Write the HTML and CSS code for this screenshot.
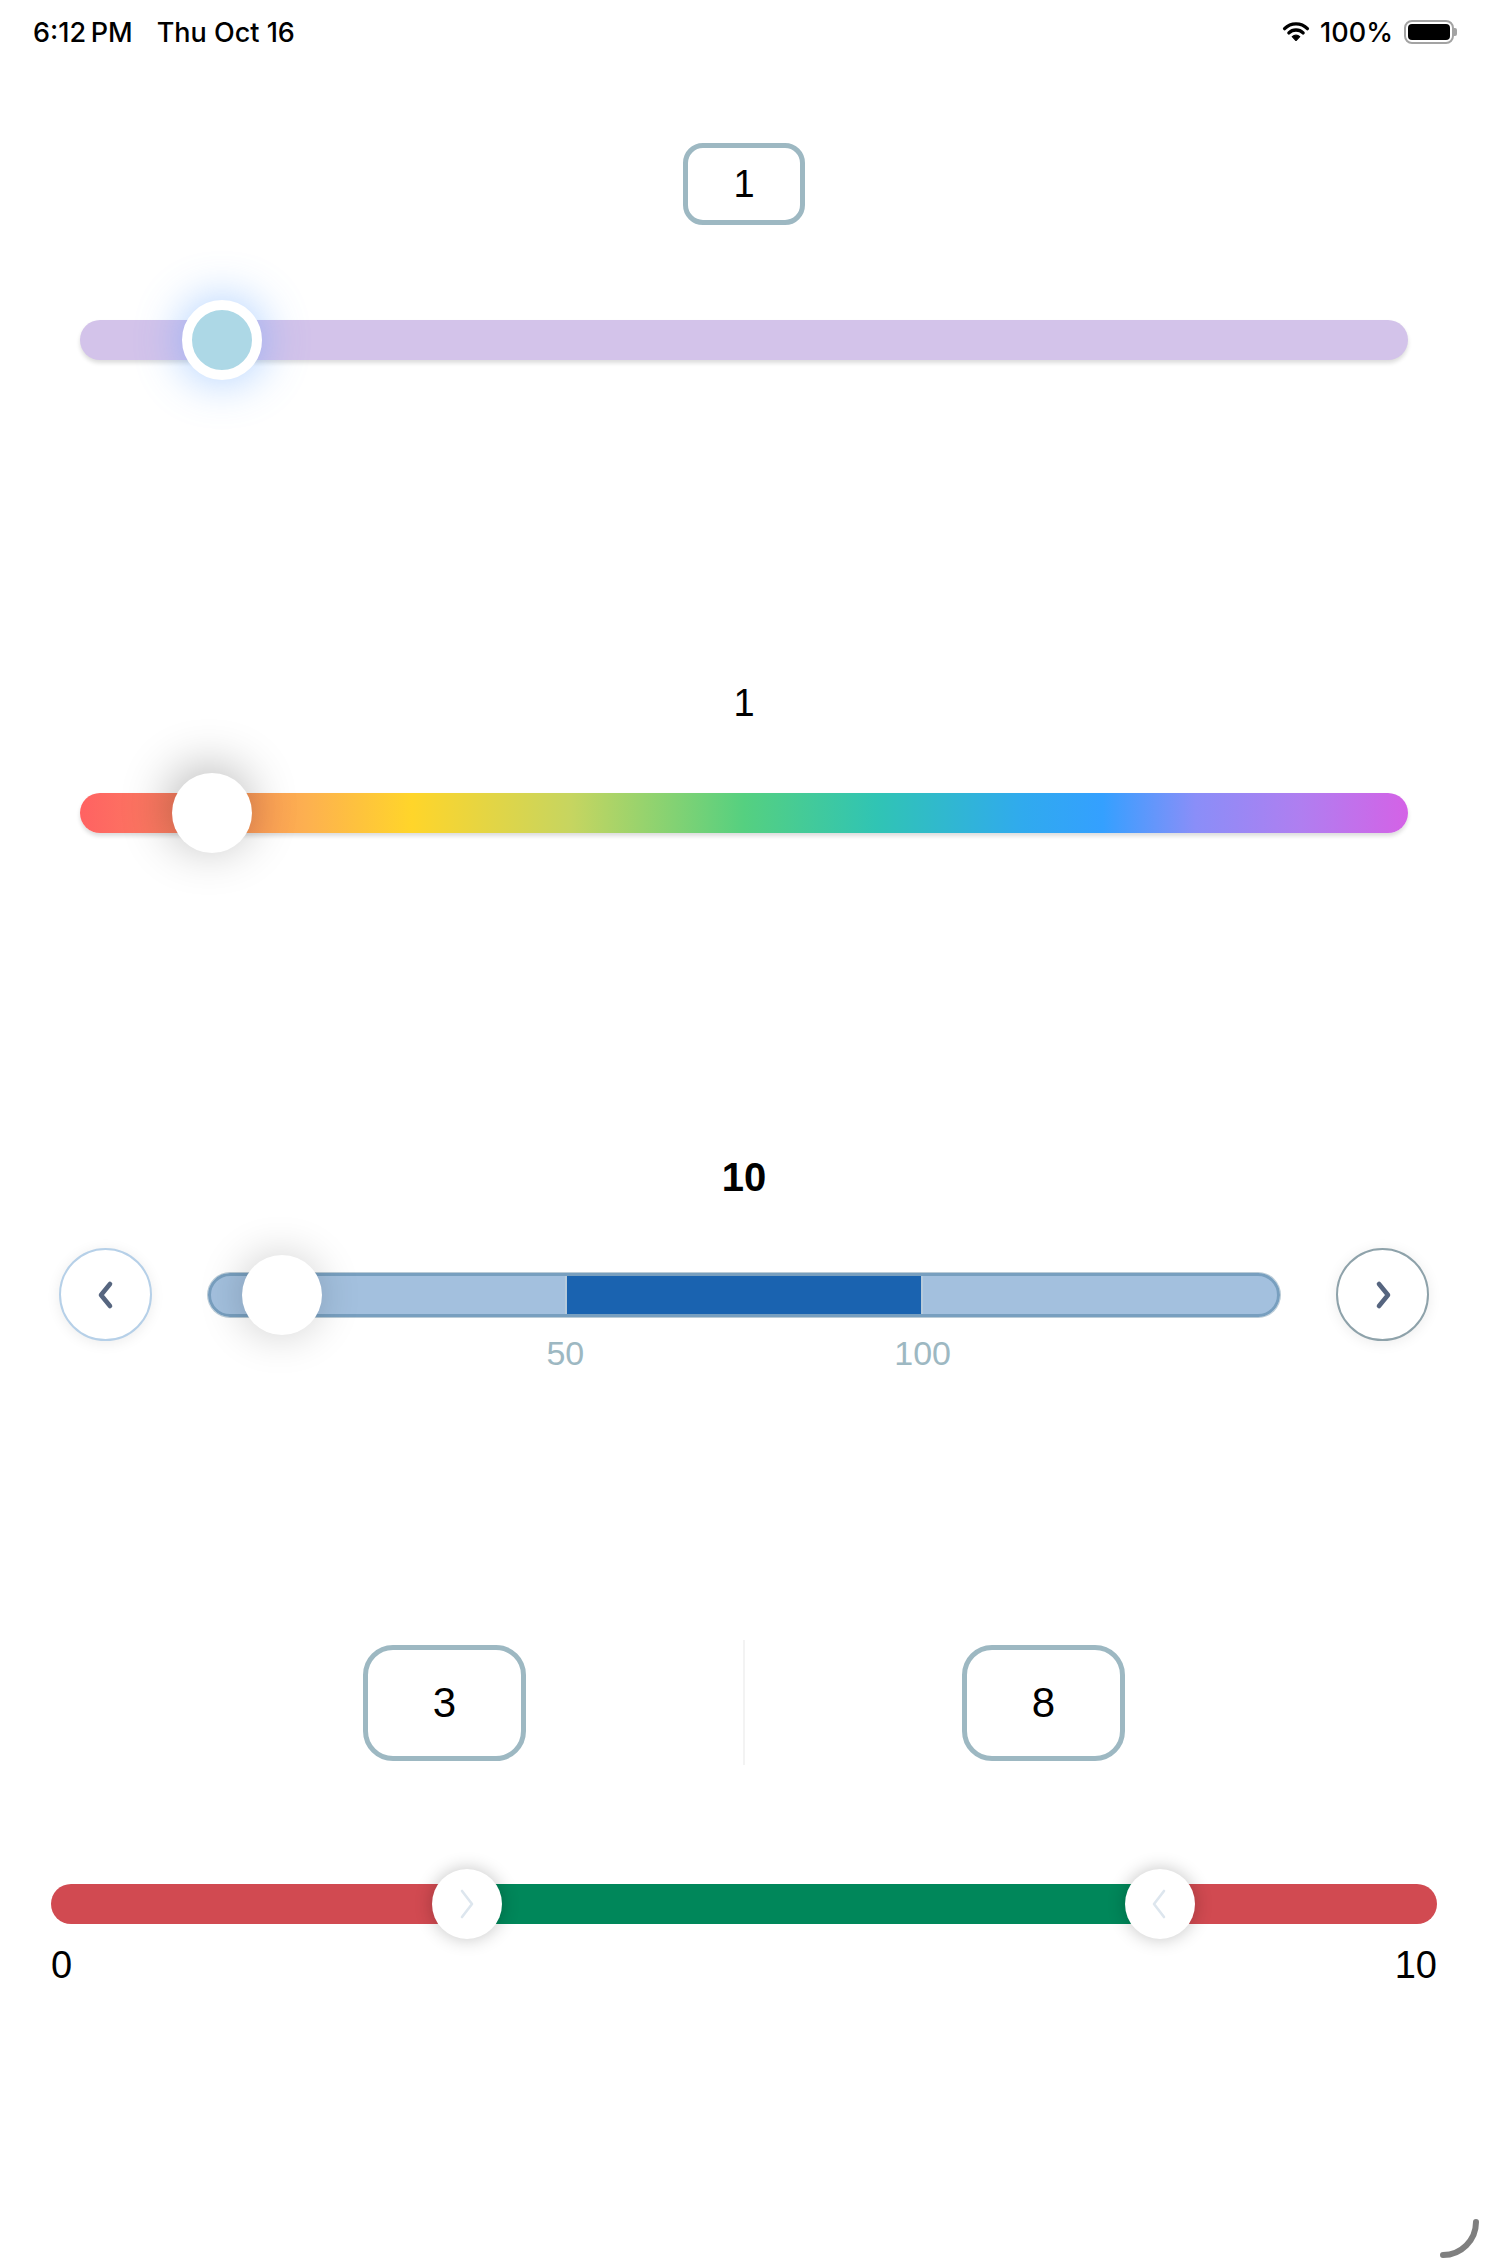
FILE: index.html
```html
<!DOCTYPE html>
<html lang="en">
<head>
<meta charset="utf-8">
<title>Sliders</title>
<link rel="stylesheet" href="styles.css">
</head>
<body>
<div class="status">
  <div class="status-left"><span>6:12&#8201;PM</span><span>Thu Oct 16</span></div>
  <div class="status-right">
    <svg class="wifi" width="28" height="20" viewBox="0 0 28 20">
      <path d="M2.6 7.6 A16 16 0 0 1 25.4 7.6" fill="none" stroke="#000" stroke-width="3.4" stroke-linecap="round"/>
      <path d="M6.9 11.9 A10 10 0 0 1 21.1 11.9" fill="none" stroke="#000" stroke-width="3.4" stroke-linecap="round"/>
      <path d="M14 19.6 L10.3 15.7 A5.3 5.3 0 0 1 17.7 15.7 Z" fill="#000" stroke="#000" stroke-width="1.2" stroke-linejoin="round"/>
    </svg>
    <span>100%</span>
    <div class="battery"><div class="battery-fill"></div></div>
    <div class="battery-nub"></div>
  </div>
</div>

<section class="s1">
  <div class="valbox">1</div>
  <div class="lane">
    <div class="track t1">
      <div class="thumb thumb1" style="left:142px"></div>
    </div>
  </div>
</section>

<section class="s2">
  <div class="label">1</div>
  <div class="lane">
    <div class="track t2">
      <div class="thumb thumb2" style="left:132px"></div>
    </div>
  </div>
</section>

<section class="s3">
  <div class="label bold">10</div>
  <div class="row3">
    <div class="circbtn left">
      <svg width="24" height="30" viewBox="0 0 24 30"><path d="M16 4 L7 15 L16 26" fill="none" stroke="#56657f" stroke-width="4.6" stroke-linecap="round" stroke-linejoin="round"/></svg>
    </div>
    <div class="track t3">
      <div class="thumb thumb3" style="left:6.667%"></div>
    </div>
    <div class="circbtn right">
      <svg width="24" height="30" viewBox="0 0 24 30"><path d="M8 4 L17 15 L8 26" fill="none" stroke="#56657f" stroke-width="4.6" stroke-linecap="round" stroke-linejoin="round"/></svg>
    </div>
  </div>
  <div class="ticks">
    <span class="tick" style="left:33.333%">50</span>
    <span class="tick" style="left:66.667%">100</span>
  </div>
</section>

<section class="s4">
  <div class="row4">
    <div class="rbox">3</div>
    <div class="divider"></div>
    <div class="rbox">8</div>
  </div>
  <div class="lane4">
    <div class="track t4">
      <div class="thumb thumb4" style="left:30%">
        <svg width="20" height="32" viewBox="0 0 20 32"><path d="M5 3 L15 16 L5 29" fill="none" stroke="#dde6ee" stroke-width="2.6" stroke-linecap="round" stroke-linejoin="round"/></svg>
      </div>
      <div class="thumb thumb4" style="left:80%">
        <svg width="20" height="32" viewBox="0 0 20 32"><path d="M14 3 L4 16 L14 29" fill="none" stroke="#dde6ee" stroke-width="2.6" stroke-linecap="round" stroke-linejoin="round"/></svg>
      </div>
    </div>
  </div>
  <div class="ends"><span>0</span><span>10</span></div>
</section>

<svg class="resize" width="46" height="46" viewBox="0 0 46 46">
  <path d="M40 8 A33 33 0 0 1 7 41" fill="none" stroke="#7f7f7f" stroke-width="6" stroke-linecap="round"/>
</svg>
</body>
</html>
```

FILE: styles.css
```css
* { box-sizing: border-box; }
html, body { margin: 0; padding: 0; }
body {
  width: 1488px;
  height: 2266px;
  background: #fff;
  color: #000;
  font-family: "Liberation Sans", Arial, sans-serif;
  position: relative;
  overflow: hidden;
}

/* status bar */
.status {
  height: 64px;
  display: flex;
  justify-content: space-between;
  align-items: center;
  padding: 0 31px 0 33px;
  font-family: Inter, "Liberation Sans", sans-serif;
  font-size: 27px;
  font-weight: 500;
}
.status-left { display: flex; gap: 24px; }
.status-right { display: flex; align-items: center; gap: 10px; }
.wifi { margin-top: -2px; }
.battery {
  width: 50px;
  height: 24px;
  border: 2px solid #a3a3a3;
  border-radius: 8px;
  padding: 2px;
  margin-left: 1px;
}
.battery-fill { width: 100%; height: 100%; background: #000; border-radius: 4px; }
.battery-nub {
  width: 3px;
  height: 8px;
  background: #a3a3a3;
  border-radius: 0 2px 2px 0;
  margin-left: -10px;
}

/* generic */
.lane { padding: 0 80px; }
.track { position: relative; height: 40px; border-radius: 20px; }
.thumb {
  position: absolute;
  top: 50%;
  transform: translate(-50%, -50%);
  border-radius: 50%;
}
.label { text-align: center; font-size: 38px; line-height: 40px; }
.label.bold { font-weight: 700; font-size: 40px; line-height: 46px; }

/* section 1 */
.s1 { padding-top: 79px; }
.valbox {
  width: 122px;
  height: 82px;
  margin: 0 auto;
  border: 5px solid #9db8c2;
  border-radius: 20px;
  display: flex;
  align-items: center;
  justify-content: center;
  font-size: 38px;
}
.t1 {
  margin-top: 95px;
  background: #d3c3ea;
  box-shadow: 0 3px 4px rgba(0, 0, 0, 0.14);
}
.thumb1 {
  width: 80px;
  height: 80px;
  background: #add8e6;
  border: 10px solid #fff;
  box-shadow: 0 0 44px 4px rgba(90, 160, 255, 0.45);
}

/* section 2 */
.s2 .label { margin-top: 323px; }
.t2 {
  margin-top: 70px;
  background: linear-gradient(90deg,
    #ff6262 0%, #fa8660 9%, #fdb050 17%, #ffd52a 25%, #c6d560 37%,
    #55d080 50%, #30c4b4 60%, #30aaee 71%, #34a0ff 77%, #8a8ef8 84%,
    #b07ef0 92%, #d462e6 100%);
  box-shadow: 0 3px 4px rgba(0, 0, 0, 0.14);
}
.thumb2 {
  width: 80px;
  height: 80px;
  background: #fff;
  box-shadow: -3px -6px 50px rgba(0, 0, 0, 0.3);
}

/* section 3 */
.s3 .label { margin-top: 321px; }
.row3 {
  display: flex;
  align-items: center;
  gap: 56px;
  padding: 0 59px;
  margin-top: 48px;
  height: 93px;
}
.circbtn {
  flex: none;
  width: 93px;
  height: 93px;
  border-radius: 50%;
  background: #fff;
  border: 2px solid #b6d0e8;
  display: flex;
  align-items: center;
  justify-content: center;
  box-shadow: 0 2px 14px rgba(0, 0, 0, 0.08);
}
.circbtn.right { border-color: #8ea2aa; }
.t3 {
  flex: 1;
  height: 44px;
  border-radius: 22px;
  border: 3px solid #789fbf;
  background: linear-gradient(90deg,
    #a3c0de 33.2%, #b6cadb 33.2% 33.4%, #1a63b0 33.4% 66.6%,
    #b6cadb 66.6% 66.8%, #a3c0de 66.8%);
  box-shadow: 0 0 0 1px rgba(140, 168, 186, 0.6);
}
.thumb3 {
  width: 80px;
  height: 80px;
  background: #fff;
  box-shadow: -2px 0 44px rgba(0, 0, 0, 0.2);
}
.ticks {
  position: relative;
  margin: -8px 0 0 208px;
  width: 1072px;
  height: 40px;
  color: #9db8c2;
  font-size: 34px;
  line-height: 40px;
}
.tick { position: absolute; top: 0; transform: translateX(-50%); }

/* section 4 */
.row4 {
  display: flex;
  justify-content: center;
  align-items: center;
  gap: 217px;
  margin-top: 267px;
}
.rbox {
  width: 163px;
  height: 116px;
  border: 5px solid #9db8c2;
  border-radius: 30px;
  display: flex;
  align-items: center;
  justify-content: center;
  font-size: 42px;
}
.divider { width: 2px; height: 125px; background: #f3f3f3; }
.lane4 { padding: 0 51px; margin-top: 119px; }
.t4 {
  background: linear-gradient(90deg, #d14a51 30%, #00875a 30% 80%, #d14a51 80%);
}
.thumb4 {
  width: 70px;
  height: 70px;
  background: #fff;
  box-shadow: 0 0 18px rgba(0, 0, 0, 0.24);
  display: flex;
  align-items: center;
  justify-content: center;
}
.ends {
  display: flex;
  justify-content: space-between;
  padding: 0 51px;
  margin-top: 19px;
  font-size: 38px;
  line-height: 44px;
}

.resize { position: absolute; left: 1436px; top: 2214px; }
```
